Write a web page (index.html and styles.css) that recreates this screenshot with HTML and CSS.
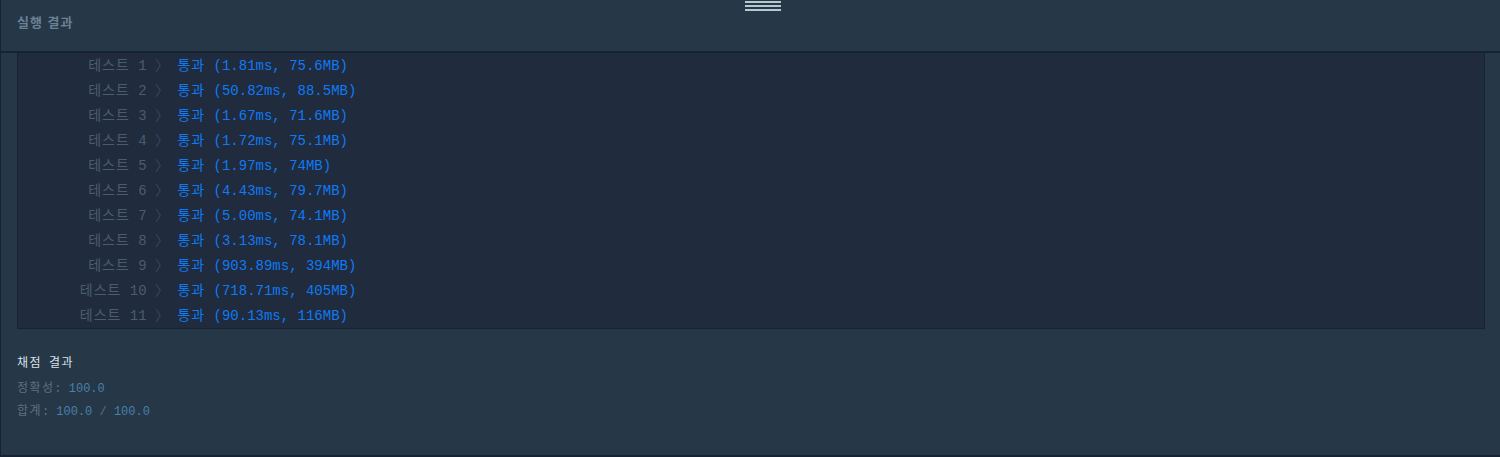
FILE: index.html
```html
<!DOCTYPE html>
<html lang="ko">
<head>
<meta charset="utf-8">
<title>실행 결과</title>
<link rel="stylesheet" href="styles.css">
</head>
<body>
<div class="panel">
  <div class="grip"><span></span><span></span><span></span></div>
  <div class="panel-head">실행 결과</div>
  <div class="console">
    <div class="row"><span class="label"><span class="ko">테스트</span> 1 <span class="arrow">〉</span></span><span class="pass"><span class="ko">통과</span> (1.81ms, 75.6MB)</span></div>
    <div class="row"><span class="label"><span class="ko">테스트</span> 2 <span class="arrow">〉</span></span><span class="pass"><span class="ko">통과</span> (50.82ms, 88.5MB)</span></div>
    <div class="row"><span class="label"><span class="ko">테스트</span> 3 <span class="arrow">〉</span></span><span class="pass"><span class="ko">통과</span> (1.67ms, 71.6MB)</span></div>
    <div class="row"><span class="label"><span class="ko">테스트</span> 4 <span class="arrow">〉</span></span><span class="pass"><span class="ko">통과</span> (1.72ms, 75.1MB)</span></div>
    <div class="row"><span class="label"><span class="ko">테스트</span> 5 <span class="arrow">〉</span></span><span class="pass"><span class="ko">통과</span> (1.97ms, 74MB)</span></div>
    <div class="row"><span class="label"><span class="ko">테스트</span> 6 <span class="arrow">〉</span></span><span class="pass"><span class="ko">통과</span> (4.43ms, 79.7MB)</span></div>
    <div class="row"><span class="label"><span class="ko">테스트</span> 7 <span class="arrow">〉</span></span><span class="pass"><span class="ko">통과</span> (5.00ms, 74.1MB)</span></div>
    <div class="row"><span class="label"><span class="ko">테스트</span> 8 <span class="arrow">〉</span></span><span class="pass"><span class="ko">통과</span> (3.13ms, 78.1MB)</span></div>
    <div class="row"><span class="label"><span class="ko">테스트</span> 9 <span class="arrow">〉</span></span><span class="pass"><span class="ko">통과</span> (903.89ms, 394MB)</span></div>
    <div class="row"><span class="label"><span class="ko">테스트</span> 10 <span class="arrow">〉</span></span><span class="pass"><span class="ko">통과</span> (718.71ms, 405MB)</span></div>
    <div class="row"><span class="label"><span class="ko">테스트</span> 11 <span class="arrow">〉</span></span><span class="pass"><span class="ko">통과</span> (90.13ms, 116MB)</span></div>
  </div>
  <div class="score">
    <div class="score-title"><span class="ko-s">채점</span> <span class="ko-s">결과</span></div>
    <div class="score-rows">
      <div class="score-row"><span class="ko-s">정확성</span>: <span class="num">100.0</span></div>
      <div class="score-row"><span class="ko-s">합계</span>: <span class="num">100.0</span> / <span class="num">100.0</span></div>
    </div>
  </div>
</div>
</body>
</html>
```

FILE: styles.css
```css
html, body {
  margin: 0;
  padding: 0;
  background: #263747;
}

.panel {
  position: relative;
  box-sizing: border-box;
  width: 1500px;
  height: 457px;
  background: #263747;
  border-left: 1px solid #172334;
  border-bottom: 2px solid #172334;
}

.grip {
  position: absolute;
  top: 1px;
  left: 744px;
  width: 36px;
  display: flex;
  flex-direction: column;
  gap: 2px;
}

.grip span {
  display: block;
  height: 2px;
  background: #b7c6cf;
}

.panel-head {
  height: 53px;
  box-sizing: border-box;
  padding-left: 16px;
  line-height: 44px;
  font-family: "Noto Sans CJK KR", "Noto Sans", sans-serif;
  font-size: 13px;
  font-weight: 700;
  letter-spacing: 1px;
  color: #6a8196;
  border-bottom: 2px solid #172334;
}

.console {
  margin-left: 16px;
  width: 1468px;
  box-sizing: border-box;
  background: #202b3d;
  border-left: 1px solid #172334;
  border-right: 1px solid #172334;
  border-bottom: 1px solid #172334;
  font-family: "Liberation Mono", "Noto Sans CJK KR", monospace;
  font-size: 14px;
}

.row {
  display: grid;
  grid-template-columns: 151px 1fr;
  column-gap: 8.4px;
  height: 25px;
  line-height: 27px;
  white-space: pre;
}

.ko {
  letter-spacing: 1px;
}

.label {
  text-align: right;
  color: #4b5c6e;
}

.arrow {
  color: #3a485a;
}

.pass {
  color: #0f7af5;
}

.score {
  padding: 23px 16px 0;
  font-family: "Liberation Mono", "Noto Sans CJK KR", monospace;
  font-size: 12px;
}

.ko-s {
  letter-spacing: 1.4px;
}

.score-title {
  line-height: 24px;
  color: #dbe2e8;
}

.score-rows {
  margin-top: 2px;
}

.score-row {
  line-height: 23px;
  color: #5c7083;
  white-space: pre;
}

.num {
  color: #4680ad;
}
```
